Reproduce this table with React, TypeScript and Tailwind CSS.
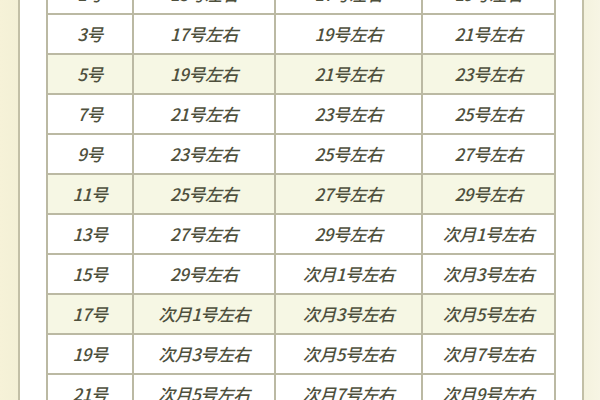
import React from "react";

const rows = [1, 3, 5, 7, 9, 11, 13, 15, 17, 19, 21];

function fmt(d: number) {
  if (d > 29) return `次月${d - 30}号左右`;
  return `${d}号左右`;
}

export default function App() {
  return (
    <div
      className="flex h-[400px] w-[600px] overflow-hidden bg-white"
      style={{ fontFamily: '"Noto Sans CJK SC", "Noto Sans", sans-serif' }}
    >
      <div className="w-[18px] shrink-0 bg-gradient-to-r from-[#f6f2d8] to-[#f3f0d6]" />
      <div className="w-[2px] shrink-0 bg-[#c2bfa6]" />
      <div className="flex flex-1 bg-white pl-[26px]">
        <div className="-mt-[25px] grid h-fit w-[508px] grid-cols-[86px_142px_147px_133px] border-l-2 border-[#bbb9a3]">
          {rows.map((n, i) => {
            const tint = i % 3 === 2;
            const cells = [`${n}号`, fmt(n + 14), fmt(n + 16), fmt(n + 18)];
            return cells.map((t, j) => (
              <div
                key={`${n}-${j}`}
                className={`flex h-[40px] items-center justify-center border-b-2 border-r-2 border-[#bbb9a3] text-[17px] font-medium italic tracking-[-0.5px] text-[#4e503d] ${
                  tint ? "bg-[#f6f7e4]" : "bg-white"
                }`}
              >
                {t}
              </div>
            ));
          })}
        </div>
      </div>
      <div className="w-[2px] shrink-0 bg-[#c2bfa6]" />
      <div className="w-[16px] shrink-0 bg-gradient-to-r from-[#f4f2de] to-[#f7f5e4]" />
    </div>
  );
}
